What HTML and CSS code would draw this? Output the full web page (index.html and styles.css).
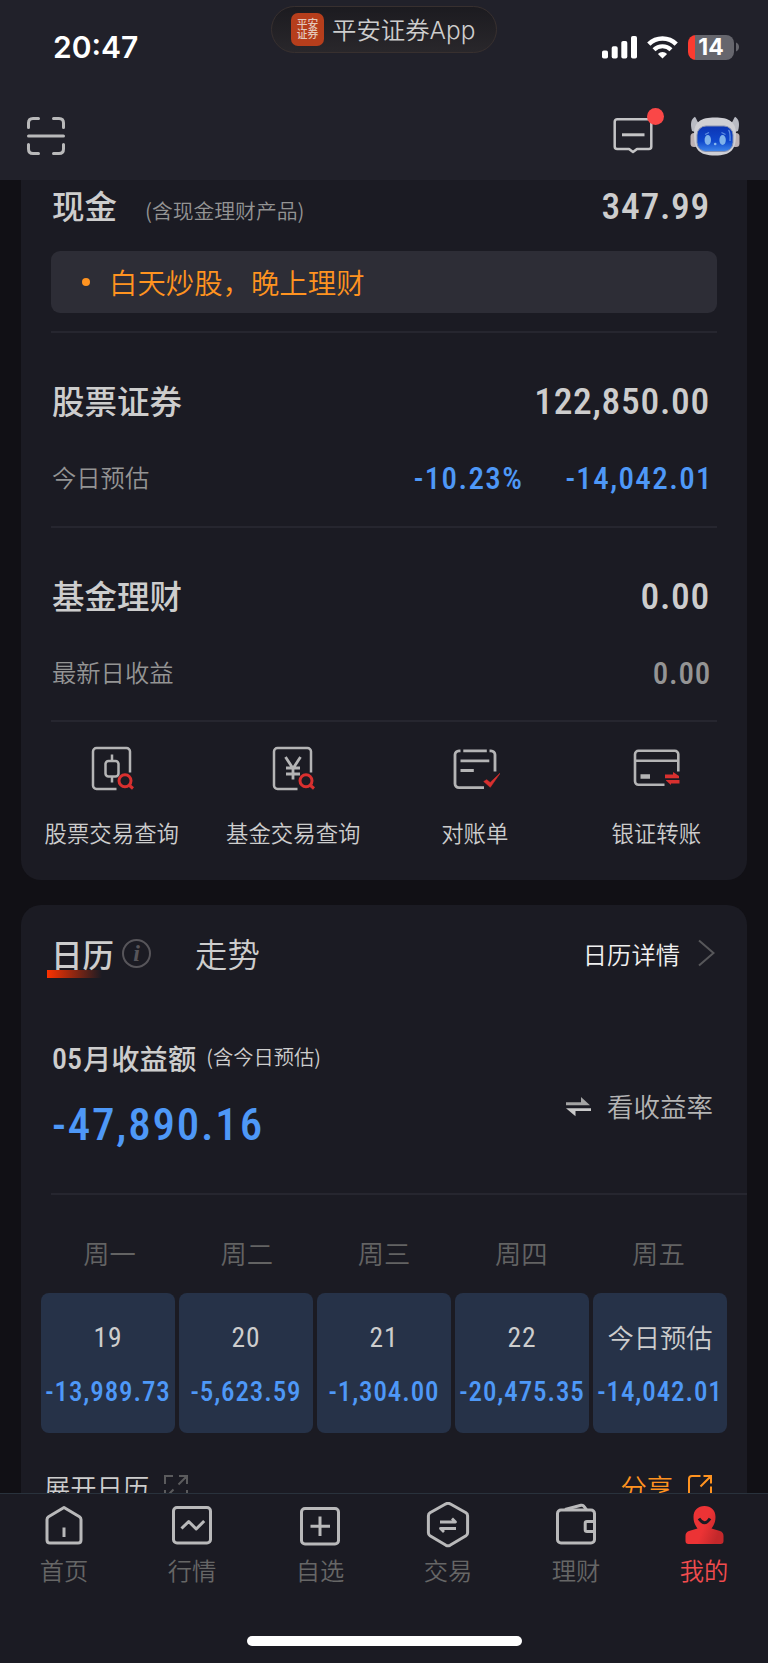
FILE: index.html
```html
<!DOCTYPE html>
<html lang="zh-CN">
<head>
  <meta charset="UTF-8">
  <title>我的</title>
  <link rel="stylesheet" href="styles.css">
</head>
<body>
  <div class="phone">
    <header class="header">
      <div class="status-bar">
        <div class="time">20:47</div>
        <div class="island">
          <span class="app-logo">平安<br>证券</span>
          <span class="app-name">平安证券App</span>
        </div>
        <div class="signals">
          <svg width="36" height="23" viewBox="0 0 36 23" fill="#fff">
            <rect x="0" y="14.5" width="6" height="8" rx="1.8"/>
            <rect x="9.7" y="10.2" width="6" height="12.3" rx="1.8"/>
            <rect x="19.3" y="5" width="6" height="17.5" rx="1.8"/>
            <rect x="29" y="0" width="6" height="22.5" rx="1.8"/>
          </svg>
          <svg class="wifi" width="31" height="23" viewBox="0 0 31 23" fill="none" stroke="#fff">
            <path d="M1.8 8.2a19.4 19.4 0 0 1 27.4 0" stroke-width="4.6"/>
            <path d="M7 13.7a12.2 12.2 0 0 1 17 0" stroke-width="4.2"/>
            <path d="M15.5 22.6l-4.6-4.7a6.6 6.6 0 0 1 9.2 0z" fill="#fff" stroke="none"/>
          </svg>
          <div class="battery"><span>14</span></div>
          <svg width="4" height="10" viewBox="0 0 4 10"><path d="M0 .5c4 1.5 4 7.500 0 9z" fill="#66666d"/></svg>
        </div>
      </div>
      <div class="toolbar">
        <svg width="40" height="40" viewBox="0 0 40 40" fill="none" stroke="#b9b9ba" stroke-width="3" stroke-linecap="round">
          <path d="M2.500 11.500V7Q2.500 2.500 7 2.500h5.500M27.500 2.500H33Q37.500 2.500 37.500 7v4.500M2.500 28.500V33Q2.500 37.500 7 37.500h5.500M27.500 37.500H33Q37.500 37.500 37.500 33v-4.500M2.500 20h35"/>
        </svg>
        <div class="toolbar-right">
          <div class="message">
            <svg width="40" height="37" viewBox="0 0 40 37" fill="none" stroke="#c4c4c6" stroke-width="2.500" stroke-linejoin="round">
              <path d="M4.200 2.200h31.600a2.500 2.500 0 0 1 2.500 2.500v24.800a2.500 2.500 0 0 1-2.500 2.500H24l-4 3-4-3H4.200a2.500 2.500 0 0 1-2.500-2.500V4.700a2.500 2.500 0 0 1 2.500-2.500z"/>
              <path d="M9 17.800h22.500" stroke-width="3"/>
            </svg>
            <span class="dot"></span>
          </div>
          <svg width="50" height="40" viewBox="0 0 50 40">
            <defs>
              <linearGradient id="face" x1="0" y1="0" x2="0" y2="1">
                <stop offset="0" stop-color="#0c35b4"/>
                <stop offset=".6" stop-color="#0f48cd"/>
                <stop offset="1" stop-color="#3f86ea"/>
              </linearGradient>
            </defs>
            <rect x="0.500" y="17" width="8" height="14" rx="3.500" fill="#bdb2b4"/>
            <rect x="41.500" y="17" width="8" height="14" rx="3.500" fill="#bdb2b4"/>
            <path d="M2 15C0 8 1 3 5 .8c2 3 2 5 4 6.700L5 16zM48 15C50 8 49 3 45 .8c-2 3-2 5-4 6.700l4 8.500z" fill="#b9bbc3"/>
            <path d="M25 1.500c14 0 21 4 21 17 0 15-5 21-21 21S4 33.500 4 18.500c0-13 7-17 21-17z" fill="#cfcfd4"/>
            <rect x="7" y="10" width="36" height="25.500" rx="9" fill="url(#face)" stroke="#8590b0" stroke-width="1"/>
            <ellipse cx="17.800" cy="24" rx="3.200" ry="5" fill="#7fb2ea"/>
            <ellipse cx="32.600" cy="24" rx="3.200" ry="5" fill="#7fb2ea"/>
            <path d="M15 18.500l4-2M35.500 18.500l-4-2M38.500 14q2 2 1.500 11" stroke="#5d8de2" stroke-width="1.300" fill="none"/>
            <circle cx="25.200" cy="28" r="1.300" fill="#8ab9ee"/>
          </svg>
        </div>
      </div>
    </header>

    <main class="content">
      <section class="card assets">
        <div class="cash">
          <h2>现金</h2>
          <span class="note">(含现金理财产品)</span>
          <span class="num amount">347.99</span>
        </div>
        <div class="notice"><i></i>白天炒股，晚上理财</div>

        <div class="asset">
          <div class="line">
            <h2>股票证券</h2>
            <span class="num amount">122,850.00</span>
          </div>
          <div class="line sub">
            <span class="label">今日预估</span>
            <span class="num down percent">-10.23%</span>
            <span class="num down">-14,042.01</span>
          </div>
        </div>

        <div class="asset">
          <div class="line">
            <h2>基金理财</h2>
            <span class="num amount">0.00</span>
          </div>
          <div class="line sub">
            <span class="label">最新日收益</span>
            <span class="num zero">0.00</span>
          </div>
        </div>

        <nav class="shortcuts">
          <a>
            <svg width="50" height="46" viewBox="0 0 50 46" fill="none" stroke="#b4b4b5" stroke-width="2.500">
              <path d="M43 26.500V5.500a3.500 3.500 0 0 0-3.500-3.500H9.500A3.500 3.500 0 0 0 6 5.500v34A3.500 3.500 0 0 0 9.500 43h20"/>
              <rect x="18.500" y="15" width="13" height="15.500" rx="3"/>
              <path d="M25 8.500V15M25 30.500V36.500"/>
              <g stroke="#d9302f" stroke-width="3"><circle cx="38" cy="34.800" r="6"/><path d="M42 39l4 3.500"/></g>
            </svg>
            股票交易查询
          </a>
          <a>
            <svg width="50" height="46" viewBox="0 0 50 46" fill="none" stroke="#b4b4b5" stroke-width="2.500">
              <path d="M43 26.500V5.500a3.500 3.500 0 0 0-3.500-3.500H9.500A3.500 3.500 0 0 0 6 5.500v34A3.500 3.500 0 0 0 9.500 43h20"/>
              <path d="M17.500 11L25 22.500 32.500 11M25 22.500V33.500M18 22h14M18 28h14" stroke-width="2.800"/>
              <g stroke="#d9302f" stroke-width="3"><circle cx="38" cy="34.800" r="6"/><path d="M42 39l4 3.500"/></g>
            </svg>
            基金交易查询
          </a>
          <a>
            <svg width="50" height="46" viewBox="-2 0 50 46" fill="none" stroke="#b4b4b5" stroke-width="2.800">
              <path d="M8.500 4.800H7.200A4 4 0 0 0 3 9v28.500a4 4 0 0 0 4 4.200h25M11.300 4.800h23.500M37.500 4.800h1.300A4 4 0 0 1 43 9v16.500M8.500 14.800h28.800M8.500 24.500h13.300"/>
              <path d="M31.700 35.500l3-1.800 3.500 2.800 9.800-9.200-9.700 14z" fill="#d9302f" stroke="#d9302f" stroke-width=".6"/>
            </svg>
            对账单
          </a>
          <a>
            <svg width="50" height="46" viewBox="-2 0 50 46" fill="none" stroke="#b4b4b5" stroke-width="2.600">
              <path d="M45.300 25.500V8.300a3.500 3.500 0 0 0-3.500-3.500H5.500A3.500 3.500 0 0 0 2 8.300v27A3.500 3.500 0 0 0 5.500 38.800H31.500M2 14.800h43.300"/>
              <path d="M7.500 30.500h9.500" stroke-width="4.500"/>
              <path d="M32 28.500h8v-2.500l6 4v2.300H32zM46.500 34H33v.5l5 4.500v-1.500h8.500z" fill="#d9302f" stroke="none"/>
            </svg>
            银证转账
          </a>
        </nav>
      </section>

      <section class="card calendar">
        <div class="tabs">
          <span class="tab active">日历</span>
          <span class="info">i</span>
          <span class="tab">走势</span>
          <a class="detail">日历详情
            <svg width="17" height="28" viewBox="0 0 17 28" fill="none" stroke="#57575a" stroke-width="2"><path d="M1 1.500l14.500 12.500L1 26.500"/></svg>
          </a>
        </div>

        <div class="summary">
          <div>
            <div class="summary-title"><span class="num">05</span>月收益额<small>(含今日预估)</small></div>
            <div class="num total">-47,890.16</div>
          </div>
          <a class="switch">
            <svg width="25" height="20" viewBox="0 0 25 20">
              <path d="M0 5.300h15V0l9 8.200H0z" fill="#a3a3a3"/>
              <path d="M25 11.200H0l9.500 8v-5.200H25z" fill="#c9c9c9"/>
            </svg>
            <span>看收益率</span>
          </a>
        </div>

        <div class="week names">
          <span>周一</span><span>周二</span><span>周三</span><span>周四</span><span>周五</span>
        </div>
        <div class="week days">
          <div class="day"><span class="num date">19</span><span class="num down">-13,989.73</span></div>
          <div class="day"><span class="num date">20</span><span class="num down">-5,623.59</span></div>
          <div class="day"><span class="num date">21</span><span class="num down">-1,304.00</span></div>
          <div class="day"><span class="num date">22</span><span class="num down">-20,475.35</span></div>
          <div class="day"><span class="today">今日预估</span><span class="num down">-14,042.01</span></div>
        </div>

        <div class="card-footer">
          <a>展开日历
            <svg width="24" height="24" viewBox="0 0 24 24" fill="none" stroke="#5b5b5d" stroke-width="2"><path d="M1 9V1h8M14.500 9.500L23 1M15 1h8v8M1 15v8h8M1 23l8.500-8.500M23 15v8h-8"/></svg>
          </a>
          <a class="share">分享
            <svg width="24" height="24" viewBox="0 0 24 24" fill="none" stroke="#ff9320" stroke-width="2"><path d="M12.500 1H4a3 3 0 0 0-3 3v16a3 3 0 0 0 3 3h16a3 3 0 0 0 3-3v-8.500M12.500 11.500L22.500 1.500M15.500 1H23v7.500"/></svg>
          </a>
        </div>
      </section>
    </main>

    <footer class="tabbar">
      <nav>
        <a>
          <svg width="50" height="50" viewBox="0 0 50 50" fill="none" stroke="#b9b9ba" stroke-width="3" stroke-linejoin="round">
            <path d="M25 5.500L9.500 14.800Q8 15.800 8 17.500V38Q8 41 11 41h28Q42 41 42 38V17.500Q42 15.800 40.500 14.800Z"/><path d="M25 25.500v9.500"/>
          </svg>
          首页
        </a>
        <a>
          <svg width="50" height="50" viewBox="0 0 50 50" fill="none" stroke="#b9b9ba" stroke-width="3">
            <rect x="6.500" y="5.500" width="37" height="35.500" rx="3.500"/><path d="M14.500 26.500l7.200-7 7.500 7.500 8-8" stroke-linejoin="round"/>
          </svg>
          行情
        </a>
        <a>
          <svg width="50" height="50" viewBox="0 0 50 50" fill="none" stroke="#b9b9ba" stroke-width="3">
            <rect x="6.500" y="6.500" width="37" height="35.500" rx="3.500"/><path d="M25 14.500v19.500M15.500 24.300h19.500"/>
          </svg>
          自选
        </a>
        <a>
          <svg width="50" height="50" viewBox="0 0 50 50" fill="none" stroke="#b9b9ba" stroke-width="3" stroke-linejoin="round">
            <path d="M23 1.800q2-1 4 0l16 9q1.600 1 1.600 3v17q0 2-1.600 3L27 43.300q-2 1-4 0L7 33.800q-1.600-1-1.600-3V13.800q0-2 1.600-3z"/>
            <path d="M17 20h15.500l-3.500-3.500M33 26.500H17.500l3.500 3.500" stroke-width="2.800"/>
          </svg>
          交易
        </a>
        <a>
          <svg width="50" height="50" viewBox="0 0 50 50" fill="none" stroke="#b9b9ba" stroke-width="3" stroke-linejoin="round">
            <rect x="6.500" y="8" width="37" height="33" rx="3.500"/><path d="M14 7.500L30 3.300q2-.5 3 1l2.500 3.500M43.500 19.500H36q-1.800 0-1.800 1.800v6.500q0 1.800 1.800 1.800h7.500"/>
          </svg>
          理财
        </a>
        <a class="current">
          <svg width="50" height="50" viewBox="0 0 50 50">
            <defs>
              <linearGradient id="me" x1="0" y1="0" x2="1" y2=".4">
                <stop offset=".6" stop-color="#ec3335"/><stop offset="1" stop-color="#c3282b"/>
              </linearGradient>
            </defs>
            <path d="M25.500 4c6.500 0 11 4 11 11 0 5-1.500 8-4 11.500l8.500 2.500c2.500 1 3.500 2.500 3.500 5v5q0 3-3 3h-32Q6.500 42 6.500 39v-5c0-2.500 1-4 3.500-5l8.500-2.500c-2.500-3.500-4-6.500-4-11.500 0-7 4.500-11 11-11z" fill="url(#me)"/>
            <path d="M20 16.500q5.500 8.500 11 0" fill="none" stroke="#1b1b23" stroke-width="3"/>
          </svg>
          我的
        </a>
      </nav>
      <div class="home-indicator"></div>
    </footer>
  </div>
</body>
</html>
```
FILE: styles.css
```css
* {
  box-sizing: border-box;
}

body {
  margin: 0;
  background: #111015;
  color: #cdcdcd;
  font-family: "Noto Sans CJK SC", sans-serif;
  font-weight: 350;
}

svg {
  display: block;
  flex: none;
}

h2 {
  margin: 0;
  padding-bottom: 5px;
  font-size: 32.5px;
  font-weight: 500;
}

.phone {
  display: flex;
  flex-direction: column;
  width: 768px;
  height: 1663px;
  overflow: hidden;
}

/* numbers */
.num {
  font-family: Roboto, "Noto Sans CJK SC", sans-serif;
  font-stretch: 85%;
  font-weight: 500;
}

.down {
  color: #4e98f7;
}

/* Header */
.header {
  height: 180px;
  background: #21212a;
}

.status-bar {
  display: grid;
  grid-template-columns: 271px 226px 1fr;
  height: 94px;
}

.time {
  padding: 27px 0 0 53px;
  font: 600 30px/40px Inter, sans-serif;
  color: #fff;
}

.island {
  display: flex;
  align-items: center;
  gap: 8px;
  height: 47px;
  margin-top: 6px;
  padding-left: 19px;
  border: 1px solid #38302f;
  border-radius: 24px;
  background: linear-gradient(#1c1b20, #29272b);
  font-family: Inter, "Noto Sans CJK SC", sans-serif;
  font-size: 24.4px;
  white-space: nowrap;
}

.app-name {
  padding-bottom: 3px;
}

.app-logo {
  width: 33px;
  height: 33px;
  padding-top: 7px;
  border-radius: 7px;
  background: #b63e1c;
  color: #e3c7bb;
  font-size: 10.8px;
  font-weight: 500;
  line-height: 10px;
  text-align: center;
}

.signals {
  display: flex;
  align-items: center;
  height: 24px;
  margin: 35px 0 0 105px;
}

.wifi {
  margin: 0 10px 0 9px;
}

.battery {
  width: 46px;
  height: 25px;
  margin-right: 2px;
  border-radius: 8px;
  background: linear-gradient(90deg, #fc3b30 7px, #66666d 7px);
  color: #fff;
  font: 700 23px/25px Inter, sans-serif;
  text-align: center;
}

.toolbar {
  display: flex;
  justify-content: space-between;
  padding: 22px 28px 0 26px;
}

.toolbar-right {
  display: flex;
  gap: 37px;
}

.message {
  position: relative;
  padding-top: 1px;
}

.dot {
  position: absolute;
  top: -8px;
  right: -11px;
  width: 17px;
  height: 17px;
  border-radius: 50%;
  background: #fa4747;
}

/* Cards */
.content {
  height: 1313px;
  overflow: hidden;
}

.card {
  width: 726px;
  margin-left: 21px;
  background: #1b1b23;
}

.assets {
  height: 700px;
  border-radius: 0 0 20px 20px;
}

.cash {
  display: flex;
  align-items: center;
  height: 71px;
  padding: 0 38px 17px 31px;
}

.note {
  margin: 6px auto 0 28px;
  font-size: 20.8px;
  color: #949494;
}

.amount {
  margin: -2px -1px 0 0;
  font-size: 37.5px;
  letter-spacing: .7px;
}

.notice {
  display: flex;
  align-items: center;
  height: 62px;
  margin: 0 30px 18px;
  padding-bottom: 2px;
  border-radius: 9px;
  background: #2d2d36;
  color: #ff9320;
  font-size: 28.4px;
}

.notice i {
  width: 8px;
  height: 8px;
  margin: 2px 19px 0 31px;
  border-radius: 50%;
  background: #ff9320;
}

.asset {
  height: 195px;
  margin: 0 30px;
  padding: 34px 8px 0 1px;
  border-top: 2px solid #26262f;
}

.line {
  display: flex;
  align-items: center;
  justify-content: space-between;
  height: 70px;
}

.sub {
  height: 82px;
  margin-right: -4px;
  color: #949494;
  font-size: 24.3px;
}

.label {
  padding-bottom: 4px;
}

.sub .num {
  font-size: 31px;
  letter-spacing: 1.4px;
}

.sub .percent {
  margin: 0 42px 0 auto;
}

.sub .zero {
  margin-right: 2px;
  letter-spacing: .8px;
}

.shortcuts {
  display: grid;
  grid-template-columns: repeat(4, 1fr);
  padding-top: 25px;
  position: relative;
  font-size: 22.4px;
  line-height: 34px;
  text-align: center;
}

.shortcuts::before {
  content: "";
  position: absolute;
  top: -1px;
  left: 30px;
  right: 30px;
  height: 2px;
  background: #26262f;
}

.shortcuts svg {
  margin: 0 auto 23px;
}

/* Calendar */
.calendar {
  height: 650px;
  margin-top: 25px;
  border-radius: 20px 20px 0 0;
}

.tabs {
  display: flex;
  align-items: center;
  height: 100px;
  padding: 0 32px 0 30px;
}

.tab {
  margin-top: -5px;
  font-size: 32.4px;
  line-height: 50px;
}

.active {
  margin-left: -4px;
  padding-left: 4px;
  font-size: 31.5px;
  font-weight: 500;
  background: linear-gradient(90deg, #fc3200, rgba(252, 50, 0, 0)) 0 42px / 55px 8px no-repeat;
}

.info {
  width: 29px;
  height: 29px;
  margin: -4px 44px 0 8px;
  border: 2px solid #57555a;
  border-radius: 50%;
  color: #57555a;
  font: italic bold 24px/24px "Liberation Serif", serif;
  text-align: center;
}

.detail {
  display: flex;
  align-items: center;
  gap: 18px;
  margin: -4px 0 0 auto;
  color: #f0f0f0;
  font-size: 24.3px;
}

.summary {
  display: flex;
  justify-content: space-between;
  height: 190px;
  margin-left: 30px;
  padding: 32px 34px 0 1px;
  border-bottom: 2px solid #26262f;
}

.summary-title {
  display: flex;
  font-size: 28.3px;
  font-weight: 500;
  line-height: 42px;
}

.summary-title .num {
  margin: 1px 1px 0 0;
  font-size: 30px;
}

.summary-title small {
  margin: -2px 0 0 10px;
  font-size: 20.3px;
  font-weight: 350;
}

.total {
  margin-top: 17px;
  color: #4e98f7;
  font-size: 45px;
  line-height: 56px;
  letter-spacing: 1.8px;
}

.switch {
  display: flex;
  align-items: center;
  gap: 16px;
  height: 40px;
  margin-top: 50px;
  color: #b4b4b4;
  font-size: 26.5px;
}

.switch span {
  padding-bottom: 3px;
}

.week {
  display: grid;
  grid-template-columns: repeat(5, 1fr);
  gap: 4px;
  margin: 0 20px;
  text-align: center;
}

.names {
  gap: 0;
  padding: 37px 0 19px;
  color: #636363;
  font-size: 26.3px;
  line-height: 42px;
}

.day {
  display: flex;
  flex-direction: column;
  align-items: center;
  height: 140px;
  padding-top: 17px;
  border-radius: 8px;
  background: #263248;
  white-space: nowrap;
}

.day span {
  font-size: 26.3px;
  line-height: 55px;
}

.day .today {
  margin: -1px 0 1px;
}

.day .date {
  font-size: 27.5px;
  font-weight: 400;
  letter-spacing: .8px;
}

.day .down {
  font-size: 27px;
  letter-spacing: .9px;
}

.card-footer {
  display: flex;
  justify-content: space-between;
  margin-top: 35px;
  padding: 0 35px 0 23px;
  font-size: 26.3px;
}

.card-footer a {
  display: flex;
  align-items: center;
  gap: 15px;
  line-height: 38px;
}

.share {
  color: #ff9320;
}

/* Bottom tab bar */
.tabbar {
  height: 170px;
  border-top: 1px solid #29323c;
  background: #1b1b23;
}

.tabbar nav {
  display: grid;
  grid-template-columns: repeat(6, 1fr);
  height: 142px;
  color: #666;
  font-size: 24.3px;
  line-height: 36px;
  text-align: center;
}

.tabbar svg {
  margin: 8px auto 0;
}

.current {
  color: #f24c4e;
}

.home-indicator {
  width: 275px;
  height: 10px;
  margin: 0 auto;
  border-radius: 5px;
  background: #fff;
}
```
